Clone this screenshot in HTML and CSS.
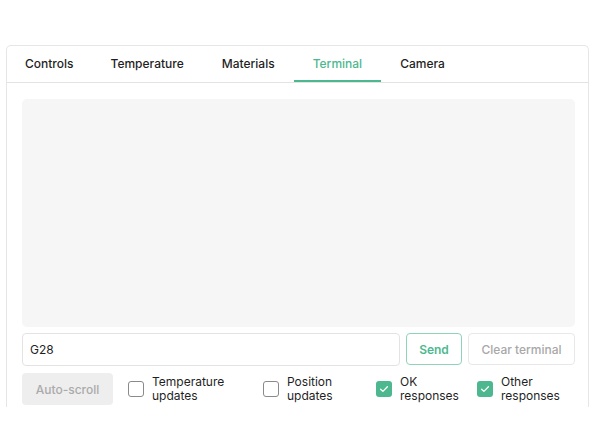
FILE: index.html
```html
<!DOCTYPE html>
<html lang="en">
<head>
  <meta charset="UTF-8">
  <meta name="viewport" content="width=device-width, initial-scale=1.0">
  <title>Terminal</title>
  <link rel="stylesheet" href="styles.css">
</head>
<body>
  <div class="panel">
    <div class="tabs">
      <button class="tab">Controls</button>
      <button class="tab">Temperature</button>
      <button class="tab">Materials</button>
      <button class="tab tab--active">Terminal</button>
      <button class="tab">Camera</button>
    </div>

    <div class="terminal">
      <div class="terminal__output"></div>

      <div class="terminal__command">
        <input class="terminal__input" type="text" value="G28">
        <button class="btn btn--send">Send</button>
        <button class="btn btn--clear">Clear terminal</button>
      </div>

      <div class="terminal__options">
        <button class="btn btn--autoscroll">Auto-scroll</button>

        <label class="option">
          <span class="option__box"></span>
          <span class="option__label">Temperature<br>updates</span>
        </label>
        <label class="option">
          <span class="option__box"></span>
          <span class="option__label">Position<br>updates</span>
        </label>
        <label class="option">
          <span class="option__box option__box--checked">
            <svg viewBox="0 0 16 16" width="16" height="16"><path d="M4.6 8.2l2.3 2.2 4.5-4.6" fill="none" stroke="#fff" stroke-width="1.3" stroke-linecap="round" stroke-linejoin="round"/></svg>
          </span>
          <span class="option__label">OK<br>responses</span>
        </label>
        <label class="option">
          <span class="option__box option__box--checked">
            <svg viewBox="0 0 16 16" width="16" height="16"><path d="M4.6 8.2l2.3 2.2 4.5-4.6" fill="none" stroke="#fff" stroke-width="1.3" stroke-linecap="round" stroke-linejoin="round"/></svg>
          </span>
          <span class="option__label">Other<br>responses</span>
        </label>
      </div>
    </div>
  </div>
</body>
</html>
```

FILE: styles.css
```css
* {
  box-sizing: border-box;
  margin: 0;
  padding: 0;
}

body {
  font-family: Inter, "Noto Sans", sans-serif;
  background-color: #fff;
  color: #1f1f1f;
  padding: 45px 3px 0 6px;
}

.panel {
  border: 1px solid #e6e6e6;
  border-bottom: none;
  border-radius: 5px 5px 0 0;
  height: 362px;
  overflow: hidden;
}

.tabs {
  display: flex;
  border-bottom: 1px solid #e3e3e3;
  height: 37px;
}

.tab {
  font-family: inherit;
  font-size: 12px;
  font-weight: 500;
  color: #1f1f1f;
  background: none;
  border: none;
  padding: 0 19px;
  height: 36px;
  cursor: pointer;
  border-bottom: 2.5px solid transparent;
}

.tab:first-child {
  padding-left: 18px;
  padding-right: 18px;
}

.tab--active {
  color: #4db88f;
  border-bottom-color: #4db88f;
}

.terminal {
  padding: 16px 13px 0 15px;
}

.terminal__output {
  background-color: #f6f6f6;
  border-radius: 5px;
  height: 228px;
}

.terminal__command {
  display: flex;
  gap: 6px;
  margin-top: 6px;
}

.terminal__input {
  flex: 1;
  height: 33px;
  border: 1px solid #e3e3e3;
  border-radius: 4px;
  padding: 0 7px;
  font-family: inherit;
  font-size: 12px;
  color: #1f1f1f;
  outline: none;
}

.btn {
  font-family: inherit;
  font-size: 12px;
  border-radius: 4px;
  background: #fff;
  cursor: pointer;
}

.btn--send {
  width: 56px;
  height: 32px;
  border: 1px solid #8fd4b8;
  color: #4db88f;
  font-weight: 600;
}

.btn--clear {
  width: 107px;
  height: 32px;
  border: 1px solid #e8e8e8;
  color: #a8a8a8;
  font-weight: 500;
}

.terminal__options {
  display: grid;
  grid-template-columns: 106px 135px 113px 101px 1fr;
  align-items: center;
  margin-top: 7px;
}

.btn--autoscroll {
  width: 91px;
  height: 32px;
  border: none;
  background-color: #eeeeee;
  color: #aaaaaa;
  font-weight: 500;
}

.option {
  display: flex;
  align-items: center;
  gap: 8px;
  font-size: 12px;
  line-height: 14px;
  color: #1f1f1f;
  cursor: pointer;
}

.option__box {
  width: 16px;
  height: 16px;
  border: 1.5px solid #8a8a8a;
  border-radius: 3px;
  flex-shrink: 0;
  display: flex;
}

.option__box--checked {
  border: none;
  background-color: #4db88f;
}
```
